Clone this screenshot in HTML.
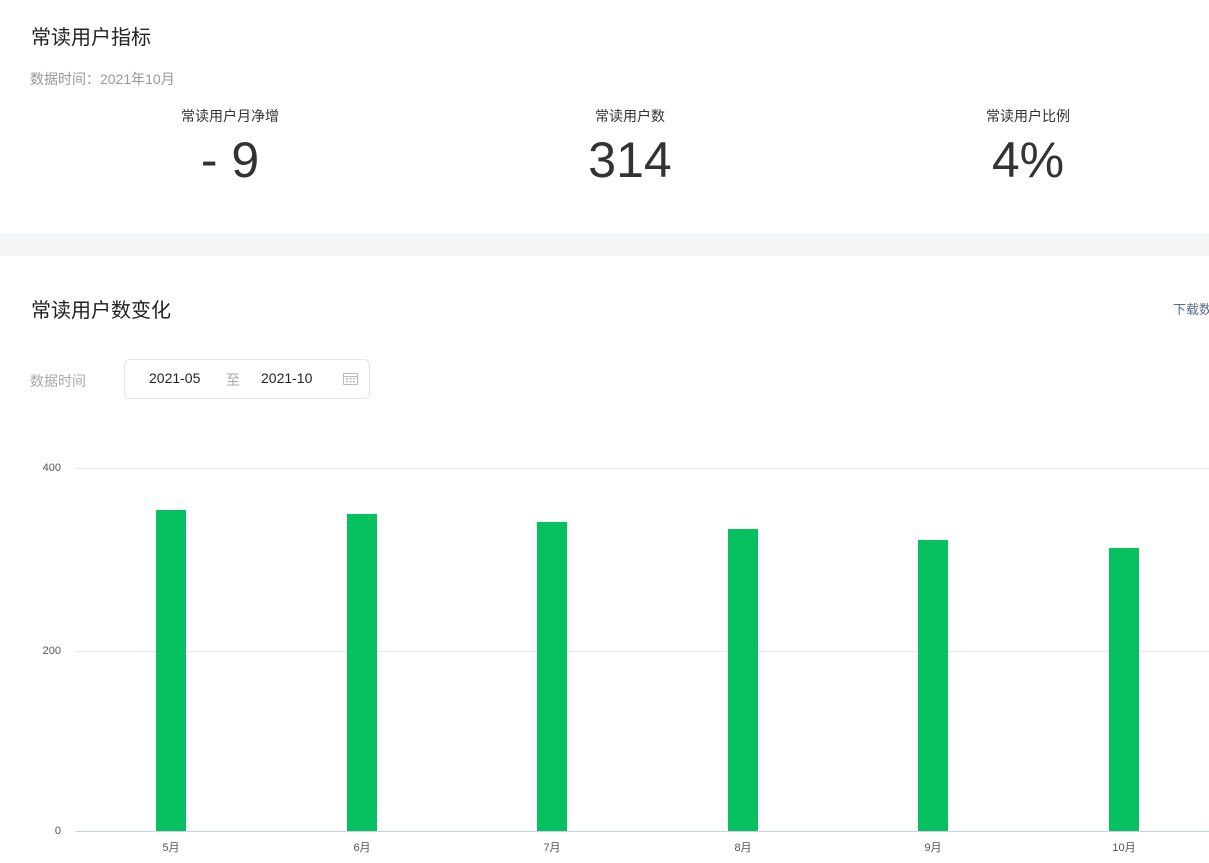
<!DOCTYPE html>
<html><head><meta charset="utf-8"><style>
body{margin:0;width:1209px;height:863px;overflow:hidden;background:#fff;font-family:"Liberation Sans","Noto Sans CJK SC",sans-serif;position:relative}
.a{position:absolute;white-space:nowrap}
.g{position:absolute;left:76px;width:1133px;height:1px;background:#e6e8ec}
.bar{position:absolute;width:30px;background:#07c160;bottom:32px}
.yl{position:absolute;font-size:11px;color:#555;width:61px;text-align:right}
.xl{position:absolute;top:839px;font-size:11px;color:#555;width:60px;text-align:center}
</style></head><body>
<div class="a" style="left:31px;top:21px;font-size:20px;color:#222">常读用户指标</div>
<div class="a" style="left:30px;top:69px;font-size:14px;color:#999">数据时间：2021年10月</div>
<div class="a" style="left:130px;width:200px;text-align:center;top:106px;font-size:14px;color:#333">常读用户月净增</div>
<div class="a" style="left:530px;width:200px;text-align:center;top:106px;font-size:14px;color:#333">常读用户数</div>
<div class="a" style="left:928px;width:200px;text-align:center;top:106px;font-size:14px;color:#333">常读用户比例</div>
<div class="a" style="left:130px;width:200px;text-align:center;top:130px;font-size:50px;color:#333;line-height:60px">- 9</div>
<div class="a" style="left:530px;width:200px;text-align:center;top:130px;font-size:50px;color:#333;line-height:60px">314</div>
<div class="a" style="left:928px;width:200px;text-align:center;top:130px;font-size:50px;color:#333;line-height:60px">4%</div>
<div style="position:absolute;left:0;top:233px;width:1209px;height:23px;background:#f4f5f7"></div>
<div class="a" style="left:31px;top:294px;font-size:20px;color:#222">常读用户数变化</div>
<div class="a" style="left:1173px;top:299px;font-size:13px;color:#576b95">下载数</div>
<div class="a" style="left:30px;top:371px;font-size:14px;color:#aaa">数据时间</div>
<div style="position:absolute;left:124px;top:359px;width:246px;height:40px;border:1px solid #e4e4e4;border-radius:6px;box-sizing:border-box"></div>
<div class="a" style="left:149px;top:370px;font-size:14px;color:#222">2021-05</div>
<div class="a" style="left:226px;top:370px;font-size:14px;color:#aaa">至</div>
<div class="a" style="left:261px;top:370px;font-size:14px;color:#222">2021-10</div>
<svg style="position:absolute;left:343px;top:372px" width="15" height="13" viewBox="0 0 15 13"><rect x="0.5" y="1.5" width="14" height="11" fill="none" stroke="#bbb"/><line x1="0.5" y1="4.5" x2="14.5" y2="4.5" stroke="#bbb"/><g fill="#bbb"><rect x="3" y="6" width="2" height="1.5"/><rect x="6.5" y="6" width="2" height="1.5"/><rect x="10" y="6" width="2" height="1.5"/><rect x="3" y="9" width="2" height="1.5"/><rect x="6.5" y="9" width="2" height="1.5"/><rect x="10" y="9" width="2" height="1.5"/></g></svg>
<div class="g" style="top:468px"></div>
<div class="g" style="top:651px"></div>
<div class="g" style="top:831px;background:#c5d0e6"></div>
<div class="yl" style="left:0;top:462px">400</div>
<div class="yl" style="left:0;top:645px">200</div>
<div class="yl" style="left:0;top:825px">0</div>
<div class="bar" style="left:156px;top:510px"></div>
<div class="bar" style="left:347px;top:514px"></div>
<div class="bar" style="left:537px;top:522px"></div>
<div class="bar" style="left:728px;top:529px"></div>
<div class="bar" style="left:918px;top:540px"></div>
<div class="bar" style="left:1109px;top:548px"></div>
<div class="xl" style="left:141px">5月</div>
<div class="xl" style="left:332px">6月</div>
<div class="xl" style="left:522px">7月</div>
<div class="xl" style="left:713px">8月</div>
<div class="xl" style="left:903px">9月</div>
<div class="xl" style="left:1094px">10月</div>
</body></html>
